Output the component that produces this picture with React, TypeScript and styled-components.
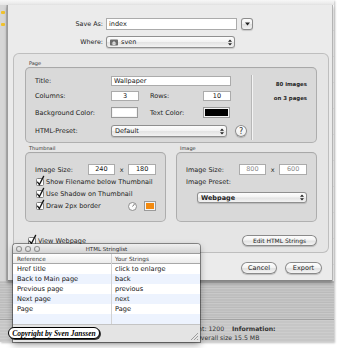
import React from "react";
import styled, { createGlobalStyle } from "styled-components";

const GlobalStyle = createGlobalStyle`
  html, body { margin: 0; padding: 0; background: #ffffff; }
  body {
    font-family: "DejaVu Sans", "Liberation Sans", sans-serif;
    font-size: 6.5px;
    color: #1c1c1c;
  }
  * { box-sizing: border-box; }
`;

const Stage = styled.div`
  position: relative;
  width: 340px;
  height: 348px;
  overflow: hidden;
  background: #ffffff;
`;

const ParentWindow = styled.div`
  width: 334px;
  height: 342px;
  display: flex;
  flex-direction: column;
  background: #cfcfcf;
  box-shadow: inset -1px 0 0 #8e8e8e, 1px 1px 2px rgba(0, 0, 0, 0.25);
`;

const TopBar = styled.div`
  height: 5px;
  background: linear-gradient(#f7f7f7, #e6e6e6);
`;

const Middle = styled.div`
  position: relative;
  height: 276px;
  display: flex;
`;

const SourceStrip = styled.div`
  width: 7px;
  background: #d6d6d6;
  box-shadow: inset -1px 0 0 #bdbdbd;
  display: flex;
  flex-direction: column;
  padding-top: 6px;
  gap: 9px;
`;

const SourceDot = styled.span`
  display: block;
  width: 4px;
  height: 3px;
  margin-left: 1px;
  border-radius: 1px;
  background: #f0c22c;
`;

const ContentArea = styled.div`
  flex: 1;
  background: repeating-linear-gradient(
    180deg,
    #ffffff 0px,
    #ffffff 25px,
    #f1f1f1 25px,
    #f1f1f1 26px
  );
`;

const Sheet = styled.div`
  position: absolute;
  left: 7px;
  top: 0;
  width: 326px;
  height: 276px;
  display: flex;
  flex-direction: column;
  padding-top: 13px;
  background: rgba(234, 234, 234, 0.95);
  box-shadow: inset 1px 0 0 #9c9c9c, inset -1px 0 0 #b4b4b4,
    inset 0 -1px 0 #858585, 0 2px 3px rgba(0, 0, 0, 0.35);
`;

const FieldRow = styled.div<{ $mt?: number; $h?: number }>`
  display: flex;
  align-items: center;
  height: ${(p) => p.$h ?? 12}px;
  margin-top: ${(p) => p.$mt ?? 0}px;
`;

const SheetLabel = styled.span`
  width: 96px;
  margin-right: 3px;
  text-align: right;
  font-size: 6.4px;
`;

const TextField = styled.div<{
  $w: number;
  $h?: number;
  $center?: boolean;
  $muted?: boolean;
}>`
  width: ${(p) => p.$w}px;
  height: ${(p) => p.$h ?? 10}px;
  line-height: ${(p) => p.$h ?? 10}px;
  padding: 0 3px;
  background: #ffffff;
  box-shadow: inset 0 0 0 1px #ababab, inset 0 1px 0 #808080;
  text-align: ${(p) => (p.$center ? "center" : "left")};
  color: ${(p) => (p.$muted ? "#8c8c8c" : "#111111")};
  white-space: nowrap;
  overflow: hidden;
`;

const MiniButton = styled.div`
  width: 12px;
  height: 12px;
  margin-left: 4px;
  border-radius: 3px;
  display: flex;
  align-items: center;
  justify-content: center;
  background: linear-gradient(#ffffff, #f0f0f0 50%, #e0e0e0 52%, #f6f6f6);
  box-shadow: inset 0 0 0 1px #8c8c8c, 0 1px 1px rgba(0, 0, 0, 0.15);
`;

const Popup = styled.div<{ $w: number; $h?: number; $ml?: number }>`
  width: ${(p) => p.$w}px;
  height: ${(p) => p.$h ?? 12}px;
  margin-left: ${(p) => p.$ml ?? 0}px;
  display: flex;
  align-items: center;
  gap: 3px;
  padding: 0 3px 0 4px;
  border-radius: 3px;
  background: linear-gradient(#ffffff, #f3f3f3 48%, #e3e3e3 52%, #f6f6f6);
  box-shadow: inset 0 0 0 1px #8f8f8f, 0 1px 1px rgba(0, 0, 0, 0.15);
`;

const PopupText = styled.span<{ $strong?: boolean }>`
  flex: 1;
  white-space: nowrap;
  font-weight: ${(p) => (p.$strong ? 600 : 400)};
`;

const HelpButton = styled.div`
  width: 12px;
  height: 12px;
  margin-left: 8px;
  border-radius: 50%;
  display: flex;
  align-items: center;
  justify-content: center;
  font-size: 8px;
  color: #333;
  background: linear-gradient(#ffffff, #ececec);
  box-shadow: inset 0 0 0 1px #8a8a8a, 0 1px 1px rgba(0, 0, 0, 0.2);
`;

const OuterBox = styled.div`
  width: 316px;
  height: 200px;
  margin: 5px 0 0 6px;
  padding: 6px 12px 0 12px;
  display: flex;
  flex-direction: column;
  border-radius: 6px;
  background: rgba(0, 0, 0, 0.025);
  box-shadow: inset 0 0 0 1px rgba(0, 0, 0, 0.17);
`;

const GroupTitle = styled.div`
  height: 8px;
  line-height: 8px;
  margin-left: 4px;
  font-size: 5px;
  color: #333;
`;

const GroupBox = styled.div<{ $h: number; $row?: boolean }>`
  height: ${(p) => p.$h}px;
  display: flex;
  flex-direction: ${(p) => (p.$row ? "row" : "column")};
  border-radius: 5px;
  background: rgba(0, 0, 0, 0.05);
  box-shadow: inset 0 0 0 1px rgba(0, 0, 0, 0.19),
    inset 0 1px 2px rgba(0, 0, 0, 0.06);
`;

const PageForm = styled.div`
  width: 226px;
  padding: 9px 0 0 10px;
  display: flex;
  flex-direction: column;
`;

const PageDivider = styled.div`
  width: 1px;
  margin: 8px 0 3px;
  background: #b7b7b7;
  box-shadow: 1px 0 0 #f4f4f4;
`;

const PageStats = styled.div`
  flex: 1;
  padding: 10px 10px 0 0;
  text-align: right;
  font-weight: 700;
  font-size: 5.4px;
  line-height: 14px;
  color: #222;
`;

const FormLabel = styled.span<{ $w: number; $ml?: number }>`
  width: ${(p) => p.$w}px;
  margin-left: ${(p) => p.$ml ?? 0}px;
  white-space: nowrap;
`;

const WellFrame = styled.div<{ $w: number; $h: number; $color: string; $ml?: number }>`
  width: ${(p) => p.$w}px;
  height: ${(p) => p.$h}px;
  margin-left: ${(p) => p.$ml ?? 0}px;
  padding: 2px;
  background: #f4f4f4;
  box-shadow: inset 0 0 0 1px #9a9a9a;
  &::after {
    content: "";
    display: block;
    width: 100%;
    height: 100%;
    background: ${(p) => p.$color};
  }
`;

const GroupsRow = styled.div`
  display: flex;
  gap: 10px;
  margin-top: 1px;
`;

const Group = styled.div`
  width: 141px;
  display: flex;
  flex-direction: column;
`;

const GroupInner = styled.div`
  padding: 12px 10px 0 10px;
  display: flex;
  flex-direction: column;
`;

const XSep = styled.span`
  width: 13px;
  text-align: center;
`;

const CheckRow = styled.label<{ $mt?: number }>`
  height: 12px;
  margin-top: ${(p) => p.$mt ?? 0}px;
  display: flex;
  align-items: center;
  gap: 2px;
  padding-left: 1px;
  white-space: nowrap;
`;

const Spacer = styled.span`
  flex: 1;
`;

const CheckSvg = styled.svg`
  overflow: visible;
  flex: none;
`;

const BottomRow = styled.div`
  margin-top: 13px;
  height: 11px;
  display: flex;
  align-items: center;
  justify-content: space-between;
  padding-left: 2px;
`;

const AquaButton = styled.div<{ $w: number; $h: number; $fs?: number }>`
  width: ${(p) => p.$w}px;
  height: ${(p) => p.$h}px;
  border-radius: 999px;
  display: flex;
  align-items: center;
  justify-content: center;
  font-size: ${(p) => p.$fs ?? 6.5}px;
  white-space: nowrap;
  background: linear-gradient(#ffffff, #f4f4f4 45%, #e2e2e2 55%, #f8f8f8);
  box-shadow: inset 0 0 0 1px #8a8a8a, 0 1px 1px rgba(0, 0, 0, 0.2);
`;

const ButtonRow = styled.div`
  margin-top: 9px;
  height: 12px;
  display: flex;
  justify-content: flex-end;
  gap: 8px;
  padding-right: 11px;
`;

const MetalBand = styled.div`
  height: 38px;
  background: repeating-linear-gradient(
    180deg,
    #c5c5c5 0px,
    #c5c5c5 1px,
    #bbbbbb 1px,
    #bbbbbb 2px,
    #c9c9c9 2px,
    #c9c9c9 3px,
    #bfbfbf 3px,
    #bfbfbf 5px
  );
`;

const InfoPanel = styled.div`
  height: 23px;
  border-top: 1px solid #a2a2a2;
  padding-top: 4px;
  line-height: 9px;
  font-size: 6.2px;
  color: #333;
  background: repeating-linear-gradient(
    180deg,
    #cdcdcd 0px,
    #cdcdcd 1px,
    #c6c6c6 1px,
    #c6c6c6 3px
  );
`;

const InfoLine = styled.div<{ $indent: number }>`
  display: flex;
  padding-left: ${(p) => p.$indent}px;
  white-space: nowrap;
`;

const InfoCount = styled.span`
  width: 46px;
`;

const InfoStrong = styled.span`
  font-weight: 700;
`;

const FloatWindow = styled.div`
  position: absolute;
  left: 13px;
  top: 244px;
  width: 187px;
  height: 98px;
  display: flex;
  flex-direction: column;
  border-radius: 3px 3px 0 0;
  overflow: hidden;
  background: #e6e6e6;
  box-shadow: 0 0 0 1px rgba(0, 0, 0, 0.4), 0 3px 7px rgba(0, 0, 0, 0.35);
`;

const TitleBar = styled.div`
  height: 10px;
  display: grid;
  grid-template-columns: 1fr auto 1fr;
  align-items: center;
  background: linear-gradient(#efefef, #d0d0d0);
  box-shadow: inset 0 -1px 0 #9c9c9c;
`;

const Lights = styled.div`
  display: flex;
  gap: 3px;
  padding-left: 3px;
`;

const Light = styled.span`
  width: 6px;
  height: 6px;
  border-radius: 50%;
  background: linear-gradient(#f4f4f4, #cfcfcf);
  box-shadow: inset 0 0 0 1px #8f8f8f;
`;

const WindowTitle = styled.span`
  font-size: 5.5px;
  color: #2a2a2a;
`;

const TableRow = styled.div<{ $alt?: boolean; $head?: boolean }>`
  height: 10px;
  display: grid;
  grid-template-columns: 99px 1fr;
  line-height: 10px;
  font-size: ${(p) => (p.$head ? 5.7 : 6.6)}px;
  color: ${(p) => (p.$head ? "#333" : "#111")};
  background: ${(p) =>
    p.$head
      ? "linear-gradient(#ffffff, #e9e9e9)"
      : p.$alt
      ? "#edf3fe"
      : "#ffffff"};
  box-shadow: ${(p) => (p.$head ? "inset 0 -1px 0 #a8a8a8" : "none")};
`;

const Cell = styled.span<{ $first?: boolean }>`
  padding-left: ${(p) => (p.$first ? 4 : 3)}px;
  white-space: nowrap;
  overflow: hidden;
  box-shadow: ${(p) => (p.$first ? "inset -1px 0 0 #d2d2d2" : "none")};
`;

const WindowFooter = styled.div`
  flex: 1;
  display: flex;
  justify-content: flex-end;
  align-items: flex-end;
  padding: 0 2px 2px 0;
  background: #e4e4e4;
  box-shadow: inset 0 1px 0 #c4c4c4;
`;

const Watermark = styled.div`
  position: absolute;
  left: 8px;
  top: 327px;
  width: 92px;
  height: 12px;
  display: flex;
  align-items: center;
  justify-content: center;
  border-radius: 6px;
  background: #ffffff;
  border: 1px solid #000;
  box-shadow: 1px 1px 0 #333;
  font-family: "Liberation Serif", "DejaVu Serif", serif;
  font-style: italic;
  font-weight: 700;
  font-size: 7.5px;
  color: #000;
  white-space: nowrap;
`;

const Check = () => (
  <CheckSvg width="8" height="8" viewBox="0 0 8 8">
    <rect x="0.5" y="0.5" width="7" height="7" rx="1" fill="#ffffff" stroke="#7f7f7f" />
    <path d="M1.6 4.2 L3.4 6.6 L7.6 -1.6" fill="none" stroke="#111" strokeWidth="1.3" strokeLinecap="round" />
  </CheckSvg>
);

const Arrows = () => (
  <svg width="4" height="7" viewBox="0 0 4 7">
    <path d="M0 2.8 L2 0.4 L4 2.8 Z M0 4.2 L2 6.6 L4 4.2 Z" fill="#222" />
  </svg>
);

const DownTriangle = () => (
  <svg width="5" height="4" viewBox="0 0 5 4">
    <path d="M0 0.5 L5 0.5 L2.5 3.5 Z" fill="#222" />
  </svg>
);

const HomeIcon = () => (
  <svg width="8" height="7" viewBox="0 0 8 7">
    <rect x="0" y="0.5" width="8" height="6" rx="0.8" fill="#6a6a6a" />
    <path d="M1.5 4.5 L4 2 L6.5 4.5 Z" fill="#d8d8d8" />
    <rect x="2.5" y="4.2" width="3" height="1.8" fill="#d8d8d8" />
  </svg>
);

const Dial = () => (
  <svg width="9" height="9" viewBox="0 0 9 9">
    <circle cx="4.5" cy="4.5" r="4" fill="#fbfbfb" stroke="#8d8d8d" />
    <path d="M4.5 4.5 L6.6 1.9" stroke="#555" strokeWidth="0.8" />
  </svg>
);

const Grip = () => (
  <svg width="8" height="8" viewBox="0 0 8 8">
    <path d="M1 8 L8 1 M4 8 L8 4 M7 8 L8 7" stroke="#8a8a8a" strokeWidth="0.8" />
  </svg>
);

const strings: [string, string][] = [
  ["Href title", "click to enlarge"],
  ["Back to Main page", "back"],
  ["Previous page", "previous"],
  ["Next page", "next"],
  ["Page", "Page"],
  ["", ""],
];

export default function App() {
  return (
    <>
      <GlobalStyle />
      <Stage>
        <ParentWindow>
          <TopBar />
          <Middle>
            <SourceStrip>
              <SourceDot />
              <SourceDot />
            </SourceStrip>
            <ContentArea />

            <Sheet>
              <FieldRow>
                <SheetLabel>Save As:</SheetLabel>
                <TextField $w={131} $h={12}>index</TextField>
                <MiniButton>
                  <DownTriangle />
                </MiniButton>
              </FieldRow>
              <FieldRow $mt={6}>
                <SheetLabel>Where:</SheetLabel>
                <Popup $w={129}>
                  <HomeIcon />
                  <PopupText>sven</PopupText>
                  <Arrows />
                </Popup>
              </FieldRow>

              <OuterBox>
                <GroupTitle>Page</GroupTitle>
                <GroupBox $h={76} $row>
                  <PageForm>
                    <FieldRow $h={10}>
                      <FormLabel $w={76}>Title:</FormLabel>
                      <TextField $w={120}>Wallpaper</TextField>
                    </FieldRow>
                    <FieldRow $h={10} $mt={5}>
                      <FormLabel $w={76}>Columns:</FormLabel>
                      <TextField $w={28} $center>3</TextField>
                      <FormLabel $w={53} $ml={11}>Rows:</FormLabel>
                      <TextField $w={28} $center>10</TextField>
                    </FieldRow>
                    <FieldRow $h={11} $mt={6}>
                      <FormLabel $w={76}>Background Color:</FormLabel>
                      <WellFrame $w={27} $h={11} $color="#ffffff" />
                      <FormLabel $w={53} $ml={12}>Text Color:</FormLabel>
                      <WellFrame $w={27} $h={11} $color="#000000" />
                    </FieldRow>
                    <FieldRow $h={12} $mt={7}>
                      <FormLabel $w={76}>HTML-Preset:</FormLabel>
                      <Popup $w={116}>
                        <PopupText>Default</PopupText>
                        <Arrows />
                      </Popup>
                      <HelpButton>?</HelpButton>
                    </FieldRow>
                  </PageForm>
                  <PageDivider />
                  <PageStats>
                    80 images
                    <br />
                    on 3 pages
                  </PageStats>
                </GroupBox>

                <GroupsRow>
                  <Group>
                    <GroupTitle>Thumbnail</GroupTitle>
                    <GroupBox $h={70}>
                      <GroupInner>
                        <FieldRow $h={11}>
                          <FormLabel $w={53}>Image Size:</FormLabel>
                          <TextField $w={28} $h={11} $center>240</TextField>
                          <XSep>x</XSep>
                          <TextField $w={28} $h={11} $center>180</TextField>
                        </FieldRow>
                        <CheckRow $mt={1}>
                          <Check />
                          Show Filename below Thumbnail
                        </CheckRow>
                        <CheckRow>
                          <Check />
                          Use Shadow on Thumbnail
                        </CheckRow>
                        <CheckRow>
                          <Check />
                          Draw 2px border
                          <Spacer />
                          <Dial />
                          <WellFrame $w={12} $h={10} $color="#f28a10" $ml={5} />
                        </CheckRow>
                      </GroupInner>
                    </GroupBox>
                  </Group>
                  <Group>
                    <GroupTitle>Image</GroupTitle>
                    <GroupBox $h={70}>
                      <GroupInner>
                        <FieldRow $h={11}>
                          <FormLabel $w={53}>Image Size:</FormLabel>
                          <TextField $w={28} $h={11} $center $muted>800</TextField>
                          <XSep>x</XSep>
                          <TextField $w={28} $h={11} $center $muted>600</TextField>
                        </FieldRow>
                        <FieldRow $h={12} $mt={1}>
                          <FormLabel $w={80}>Image Preset:</FormLabel>
                        </FieldRow>
                        <FieldRow $h={11} $mt={4}>
                          <Popup $w={110} $h={11} $ml={11}>
                            <PopupText $strong>Webpage</PopupText>
                            <Arrows />
                          </Popup>
                        </FieldRow>
                      </GroupInner>
                    </GroupBox>
                  </Group>
                </GroupsRow>

                <BottomRow>
                  <CheckRow>
                    <Check />
                    View Webpage
                  </CheckRow>
                  <AquaButton $w={75} $h={11} $fs={6}>
                    Edit HTML Strings
                  </AquaButton>
                </BottomRow>
              </OuterBox>

              <ButtonRow>
                <AquaButton $w={36} $h={12}>Cancel</AquaButton>
                <AquaButton $w={37} $h={12}>Export</AquaButton>
              </ButtonRow>
            </Sheet>
          </Middle>
          <MetalBand />
          <InfoPanel>
            <InfoLine $indent={186}>
              <InfoCount>Count: 1200</InfoCount>
              <InfoStrong>Information:</InfoStrong>
            </InfoLine>
            <InfoLine $indent={196}>Overall size 15.5 MB</InfoLine>
          </InfoPanel>
        </ParentWindow>

        <FloatWindow>
          <TitleBar>
            <Lights>
              <Light />
              <Light />
              <Light />
            </Lights>
            <WindowTitle>HTML Stringlist</WindowTitle>
            <span />
          </TitleBar>
          <TableRow $head>
            <Cell $first>Reference</Cell>
            <Cell>Your Strings</Cell>
          </TableRow>
          {strings.map(([a, b], i) => (
            <TableRow key={i} $alt={i % 2 === 1}>
              <Cell $first>{a}</Cell>
              <Cell>{b}</Cell>
            </TableRow>
          ))}
          <WindowFooter>
            <Grip />
          </WindowFooter>
        </FloatWindow>

        <Watermark>Copyright by Sven Janssen</Watermark>
      </Stage>
    </>
  );
}
